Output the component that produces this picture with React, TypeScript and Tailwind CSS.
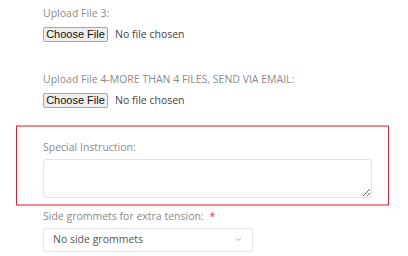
import { ChevronDown } from 'lucide-react';

function FileField({ label }: { label: string }) {
  return (
    <div>
      <div className="text-[10.5px] leading-[14px] text-[#8a8a8a]">{label}</div>
      <div className="mt-[7px] flex items-center">
        <button className="h-[15px] w-[65px] rounded-[2px] border border-[#a6a6a6] bg-[#efefef] font-['Liberation_Sans',Arial,sans-serif] text-[11px] leading-none text-[#111]">
          Choose File
        </button>
        <span className="ml-[7px] text-[10.5px] text-[#444]">No file chosen</span>
      </div>
    </div>
  );
}

export default function App() {
  return (
    <div className="h-[256px] w-[408px] overflow-hidden bg-white pt-[6px] font-['Open_Sans',sans-serif]">
      <div className="pl-[43px]">
        <FileField label="Upload File 3:" />
        <div className="mt-[29px]">
          <FileField label="Upload File 4-MORE THAN 4 FILES, SEND VIA EMAIL:" />
        </div>
      </div>

      {/* highlighted field */}
      <div className="ml-[16px] mt-[16px] w-[373px] border-x border-y-2 border-x-[#e8192c] border-y-[#f28a92] pb-[6px] pl-[26px] pr-[16px] pt-[13px]">
        <div className="text-[10.5px] leading-[14px] text-[#8a8a8a]">Special Instruction:</div>
        <textarea className="mt-[5px] block h-[39px] w-[329px] rounded-[3px] border border-[#e3e3e3] bg-white" />
      </div>

      <div className="pl-[43px] pt-[3px]">
        <div className="text-[10.5px] leading-[14px] text-[#8a8a8a]">
          Side grommets for extra tension: <span className="ml-[3px] text-[#e23b3b]">*</span>
        </div>
        <div className="mt-[5px] flex h-[24px] w-[210px] items-center justify-between rounded-[3px] border border-[#e3e3e3] pl-[9px] pr-[9px]">
          <span className="text-[10.5px] text-[#555]">No side grommets</span>
          <ChevronDown className="h-[9px] w-[9px] text-[#999]" strokeWidth={2} />
        </div>
      </div>
    </div>
  );
}
